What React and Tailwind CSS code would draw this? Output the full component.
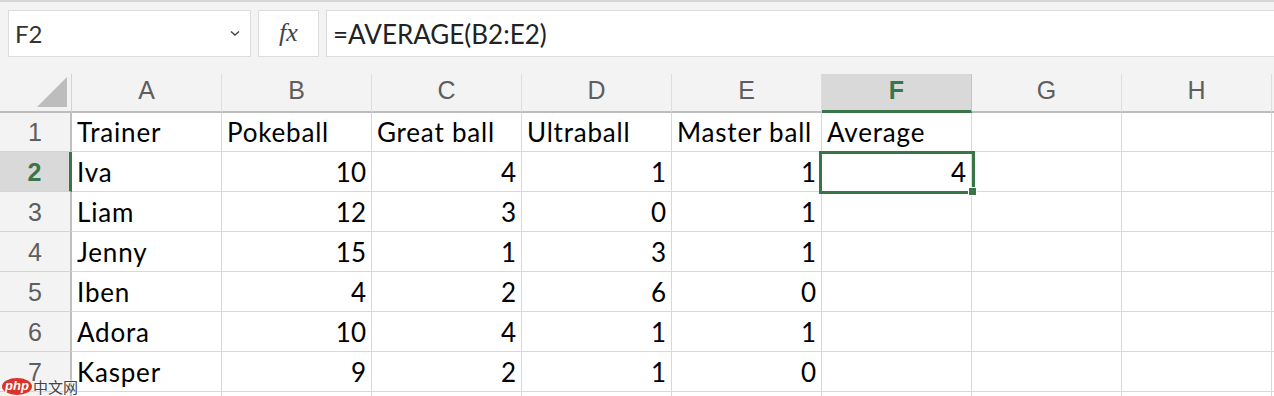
import React from "react";

const cols = ["A", "B", "C", "D", "E", "F", "G", "H"];
const rows = [
  ["Trainer", "Pokeball", "Great ball", "Ultraball", "Master ball", "Average", "", ""],
  ["Iva", 10, 4, 1, 1, 4, "", ""],
  ["Liam", 12, 3, 0, 1, "", "", ""],
  ["Jenny", 15, 1, 3, 1, "", "", ""],
  ["Iben", 4, 2, 6, 0, "", "", ""],
  ["Adora", 10, 4, 1, 1, "", "", ""],
  ["Kasper", 9, 2, 1, 0, "", "", ""],
  ["", "", "", "", "", "", "", ""],
];

export default function App() {
  return (
    <div className="relative w-[1274px] h-[396px] overflow-hidden bg-[#f3f3f3] border-t-2 border-[#d6d6d6] font-['Liberation_Sans',sans-serif]">
      {/* toolbar */}
      <div className="flex h-[47px] mt-[8px]">
        <div className="ml-[8px] w-[243px] bg-white border border-[#dcdcdc] flex items-center pl-[6px] pr-[10px]">
          <span className="text-[24px] text-[#333] font-['Lato',sans-serif] leading-none">F2</span>
          <svg className="ml-auto" width="10" height="7" viewBox="0 0 10 7">
            <polyline points="1,1.5 5,5 9,1.5" fill="none" stroke="#444" strokeWidth="1.4" />
          </svg>
        </div>
        <div className="ml-[7px] w-[61px] bg-white border border-[#dcdcdc] flex items-center justify-center">
          <span className="font-['Liberation_Serif',serif] italic text-[26px] text-[#444] leading-none pb-[2px]">fx</span>
        </div>
        <div className="ml-[7px] flex-1 -mr-[4px] bg-white border border-[#dcdcdc] flex items-center pl-[6px]">
          <span className="text-[26px] text-[#222] leading-none font-['Lato',sans-serif]">=AVERAGE(B2:E2)</span>
        </div>
      </div>

      {/* sheet */}
      <div className="mt-[17px]">
        {/* column header */}
        <div className="flex h-[39px]">
          <div className="relative w-[72px] border-r border-[#d4d4d4] border-b-2 border-b-[#bdbdbd]">
            <svg className="absolute left-[37px] top-[3px]" width="30" height="30" viewBox="0 0 30 30">
              <polygon points="30,0 30,30 0,30" fill="#bdbdbd" />
            </svg>
          </div>
          {cols.map((c) =>
            c === "F" ? (
              <div
                key={c}
                className="w-[150px] bg-[#d9d9d9] border-r border-[#c4c4c4] border-b-[3px] border-b-[#3a7549] flex items-center justify-center pb-[2px] text-[25px] font-bold text-[#3a7549]"
              >
                {c}
              </div>
            ) : (
              <div
                key={c}
                className="w-[150px] border-r border-[#dedede] border-b-2 border-b-[#bdbdbd] flex items-center justify-center pb-[3px] text-[25px] text-[#5e5e5e]"
              >
                {c}
              </div>
            )
          )}
          <div className="flex-1 border-b-2 border-[#bdbdbd]" />
        </div>

        {rows.map((r, ri) => {
          const n = ri + 1;
          const sel = n === 2;
          return (
            <div key={ri} className={`flex ${n === 1 ? "h-[39px]" : "h-[40px]"}`}>
              <div
                className={
                  sel
                    ? "w-[72px] bg-[#d9d9d9] border-r-[3px] border-r-[#3a7549] border-b border-b-[#d4d4d4] flex items-center justify-center pt-[2px] text-[25px] font-bold text-[#3a7549]"
                    : "w-[72px] border-r-2 border-r-[#bfbfbf] border-b border-b-[#d4d4d4] flex items-center justify-center pt-[2px] text-[25px] text-[#5e5e5e]"
                }
              >
                {n}
              </div>
              {r.map((v, ci) => {
                const isNum = typeof v === "number";
                const selected = sel && ci === 5;
                return (
                  <div
                    key={ci}
                    className={`relative w-[150px] bg-white border-r border-b border-[#d8d8d8] flex items-end px-[5px] pb-[6px] text-[26px] leading-none text-black font-['Lato',sans-serif] whitespace-nowrap ${
                      isNum || selected ? "justify-end" : "justify-start tracking-[0.8px]"
                    }`}
                  >
                    {v}
                    {selected && (
                      <div className="absolute z-10 -left-[3px] -top-[1px] -right-[4px] -bottom-[3px] border-[3px] border-[#3a7549]">
                        <div className="absolute -right-[5px] -bottom-[5px] w-[9px] h-[9px] bg-[#3a7549] border border-white" />
                      </div>
                    )}
                  </div>
                );
              })}
              <div className="flex-1 bg-white border-b border-[#d8d8d8]" />
            </div>
          );
        })}
      </div>

      {/* watermark */}
      <div className="absolute left-[2px] top-[376px] flex items-center">
        <div className="w-[30px] h-[17px] rounded-[50%] bg-[#d9342b] flex items-center justify-center">
          <span className="text-white italic font-bold text-[13px] leading-none font-['Liberation_Sans',sans-serif] -mt-[2px]">php</span>
        </div>
        <span
          className="ml-[1px] text-[15px] leading-none text-[#444] font-['Noto_Sans_CJK_SC',sans-serif]"
          style={{ textShadow: "0 0 2px #fff, 0 0 2px #fff" }}
        >
          中文网
        </span>
      </div>
    </div>
  );
}
